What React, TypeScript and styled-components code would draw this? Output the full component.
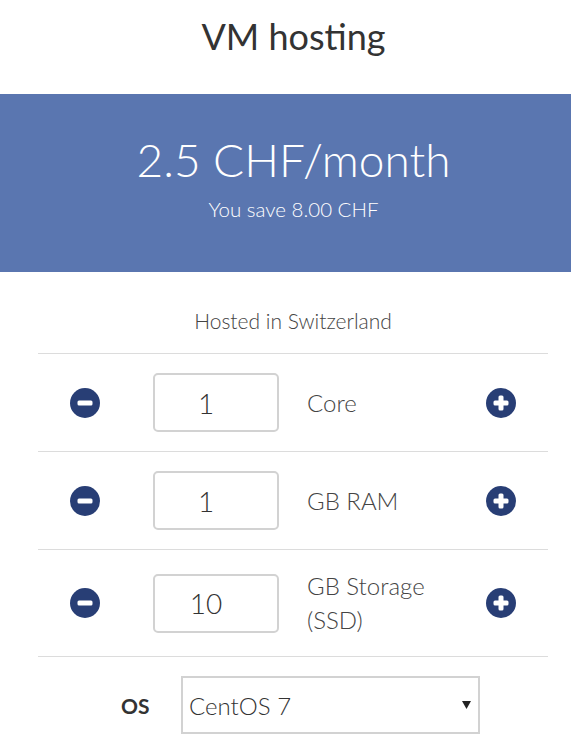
import React from "react";
import styled, { createGlobalStyle } from "styled-components";

const GlobalStyle = createGlobalStyle`
  html, body {
    margin: 0;
    padding: 0;
    background: #ffffff;
  }
  body {
    font-family: Lato, "Open Sans", "Liberation Sans", sans-serif;
    color: #333333;
  }
  * { box-sizing: border-box; }
`;

const Page = styled.div`
  width: 571px;
  display: flex;
  flex-direction: column;
`;

const Title = styled.h1`
  margin: 15px 0 0 16px;
  font-size: 36px;
  font-weight: 400;
  line-height: 1.2;
  text-align: center;
  color: #333333;
`;

const PriceBand = styled.section`
  margin-top: 36px;
  background: #5a76b0;
  color: #ffffff;
  padding: 38px 0 50px 16px;
  display: flex;
  flex-direction: column;
  align-items: center;
  gap: 10px;
`;

const Price = styled.div`
  font-size: 46px;
  font-weight: 300;
  line-height: 1.2;
`;

const Saving = styled.div`
  font-size: 20.5px;
  font-weight: 300;
  line-height: 1.2;
`;

const Content = styled.div`
  margin: 0 23px 0 38px;
  display: flex;
  flex-direction: column;
`;

const Hosted = styled.p`
  margin: 36px 0 20px;
  text-align: center;
  font-size: 21px;
  font-weight: 300;
  line-height: 1.2;
  color: #444444;
`;

const RowList = styled.div`
  border-top: 1px solid #dcdcdc;
`;

const Row = styled.div`
  display: grid;
  grid-template-columns: 94px 175px 1fr 30px;
  align-items: center;
  padding: 19px 32px 19px 0;
  border-bottom: 1px solid #dcdcdc;
`;

const IconCell = styled.button`
  justify-self: center;
  width: 30px;
  height: 30px;
  padding: 0;
  border: none;
  background: none;
  display: flex;
  cursor: pointer;
`;

const AmountInput = styled.input`
  margin-left: 21px;
  width: 126px;
  height: 59px;
  border: 2px solid #d2d2d2;
  border-radius: 5px;
  font-family: inherit;
  font-size: 28px;
  font-weight: 300;
  color: #333333;
  text-align: center;
  padding: 0 20px 0 0;
  outline: none;
`;

const UnitLabel = styled.span`
  max-width: 140px;
  font-size: 24px;
  font-weight: 300;
  line-height: 34px;
  color: #444444;
`;

const OsRow = styled.div`
  display: flex;
  align-items: center;
  gap: 30px;
  padding: 19px 0 0 83px;
`;

const OsLabel = styled.label`
  width: 30px;
  font-size: 21px;
  font-weight: 700;
  color: #333333;
`;

const SelectWrap = styled.div`
  position: relative;
  width: 299px;
`;

const OsSelect = styled.select`
  appearance: none;
  -webkit-appearance: none;
  width: 100%;
  height: 58px;
  border: 2px solid #d2d2d2;
  border-radius: 0;
  background: #ffffff;
  padding: 0 0 0 6px;
  font-family: inherit;
  font-size: 24px;
  font-weight: 300;
  color: #333333;
  outline: none;
`;

const Caret = styled.svg`
  position: absolute;
  right: 9px;
  top: 25px;
  pointer-events: none;
`;

const MinusIcon = () => (
  <svg width="30" height="30" viewBox="0 0 30 30">
    <circle cx="15" cy="15" r="15" fill="#283e75" />
    <rect x="7.5" y="12.5" width="15" height="5" rx="1.5" fill="#ffffff" />
  </svg>
);

const PlusIcon = () => (
  <svg width="30" height="30" viewBox="0 0 30 30">
    <circle cx="15" cy="15" r="15" fill="#283e75" />
    <rect x="7.5" y="12.5" width="15" height="5" rx="1.5" fill="#ffffff" />
    <rect x="12.5" y="7.5" width="5" height="15" rx="1.5" fill="#ffffff" />
  </svg>
);

const resources = [
  { value: "1", unit: "Core" },
  { value: "1", unit: "GB RAM" },
  { value: "10", unit: "GB Storage (SSD)" },
];

export default function App() {
  return (
    <Page>
      <GlobalStyle />
      <Title>VM hosting</Title>
      <PriceBand>
        <Price>2.5 CHF/month</Price>
        <Saving>You save 8.00 CHF</Saving>
      </PriceBand>
      <Content>
        <Hosted>Hosted in Switzerland</Hosted>
        <RowList>
          {resources.map((r) => (
            <Row key={r.unit}>
              <IconCell aria-label="decrease">
                <MinusIcon />
              </IconCell>
              <AmountInput defaultValue={r.value} />
              <UnitLabel>{r.unit}</UnitLabel>
              <IconCell aria-label="increase">
                <PlusIcon />
              </IconCell>
            </Row>
          ))}
        </RowList>
        <OsRow>
          <OsLabel>OS</OsLabel>
          <SelectWrap>
            <OsSelect defaultValue="centos7">
              <option value="centos7">CentOS 7</option>
            </OsSelect>
            <Caret width="9" height="8" viewBox="0 0 9 8">
              <path d="M0 0 H9 L4.5 8 Z" fill="#222222" />
            </Caret>
          </SelectWrap>
        </OsRow>
      </Content>
    </Page>
  );
}
